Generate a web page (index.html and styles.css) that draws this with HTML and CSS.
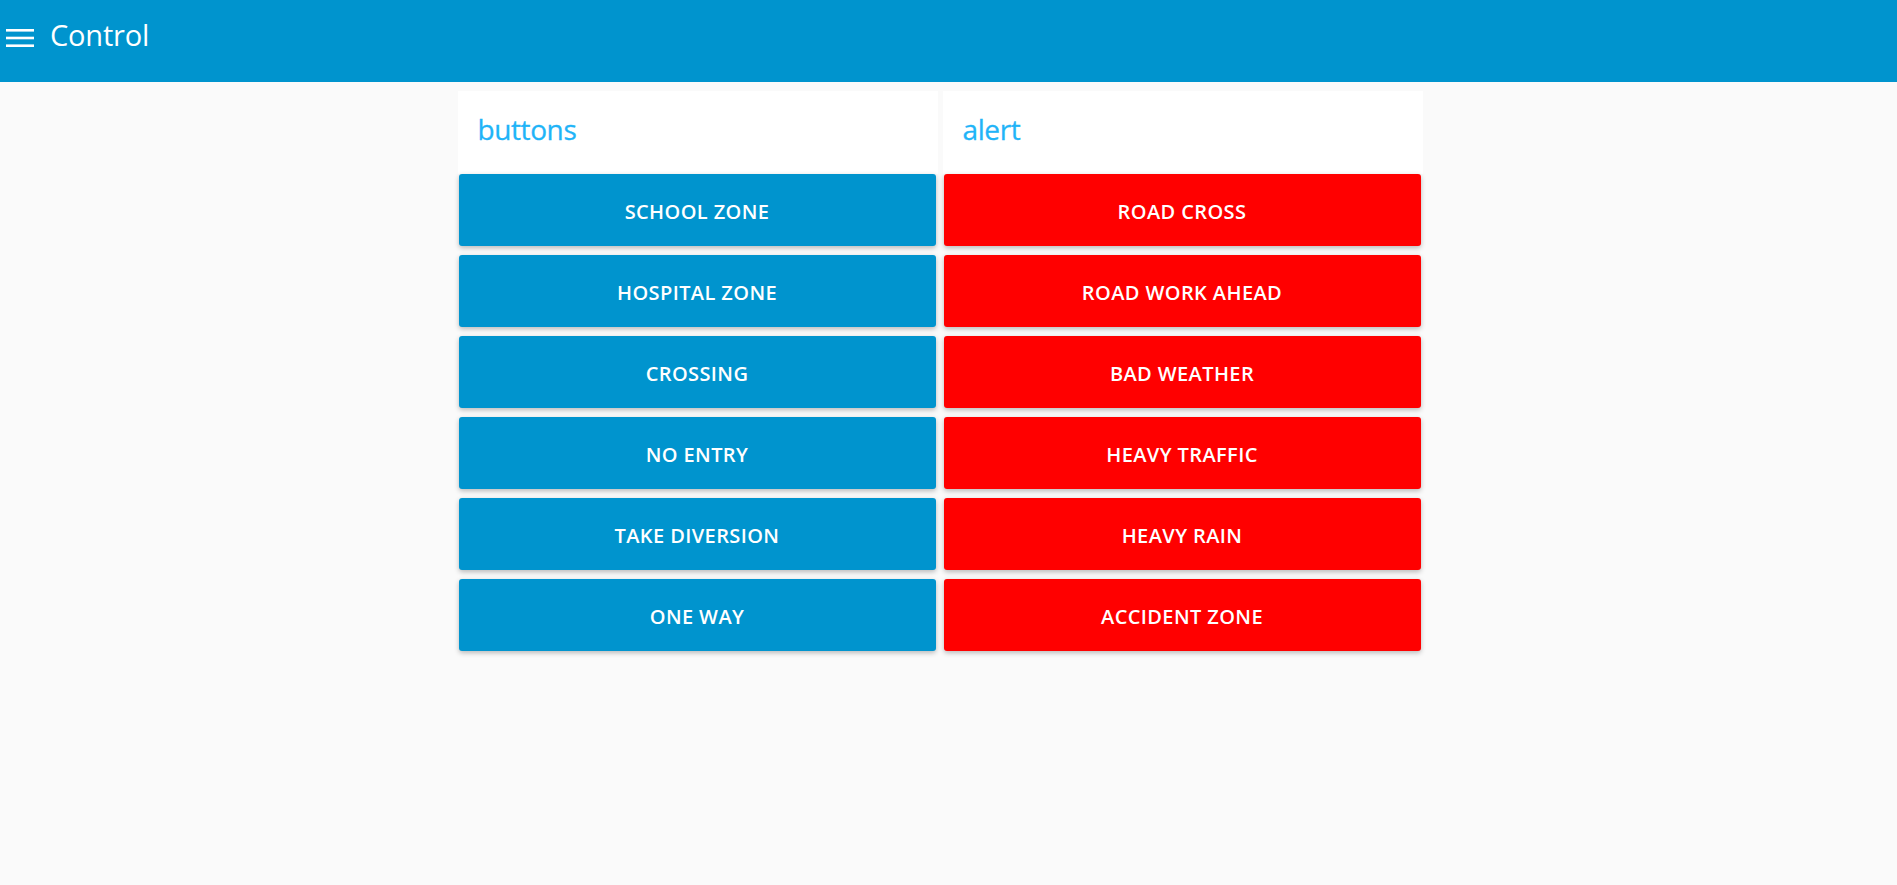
FILE: index.html
```html
<!DOCTYPE html>
<html lang="en">
<head>
<meta charset="utf-8">
<title>Control</title>
<link rel="stylesheet" href="styles.css">
</head>
<body>
<header class="toolbar">
  <div class="toolbar-row">
    <svg class="menu-icon" width="28" height="18" viewBox="0 0 28 18" aria-hidden="true">
      <rect x="0" y="0" width="28" height="2.6" fill="#fff"/>
      <rect x="0" y="7.7" width="28" height="2.6" fill="#fff"/>
      <rect x="0" y="15.4" width="28" height="2.6" fill="#fff"/>
    </svg>
    <h1 class="title">Control</h1>
  </div>
</header>
<main class="content">
  <section class="group">
    <div class="group-header"><span class="group-title">buttons</span></div>
    <div class="group-body">
      <button class="btn btn-blue">SCHOOL ZONE</button>
      <button class="btn btn-blue">HOSPITAL ZONE</button>
      <button class="btn btn-blue">CROSSING</button>
      <button class="btn btn-blue">NO ENTRY</button>
      <button class="btn btn-blue">TAKE DIVERSION</button>
      <button class="btn btn-blue">ONE WAY</button>
    </div>
  </section>
  <section class="group">
    <div class="group-header"><span class="group-title">alert</span></div>
    <div class="group-body">
      <button class="btn btn-red">ROAD CROSS</button>
      <button class="btn btn-red">ROAD WORK AHEAD</button>
      <button class="btn btn-red">BAD WEATHER</button>
      <button class="btn btn-red">HEAVY TRAFFIC</button>
      <button class="btn btn-red">HEAVY RAIN</button>
      <button class="btn btn-red">ACCIDENT ZONE</button>
    </div>
  </section>
</main>
</body>
</html>
```
FILE: styles.css
```css
* { box-sizing: border-box; }
html, body {
  margin: 0;
  padding: 0;
  background: #fafafa;
  font-family: "Open Sans", "Noto Sans", sans-serif;
  height: 100%;
}
.toolbar {
  height: 82px;
  background: #0094ce;
  color: #fff;
}
.toolbar-row {
  display: flex;
  align-items: flex-start;
  padding: 0 0 0 6px;
}
.menu-icon {
  display: block;
  margin-top: 29px;
  flex: none;
}
.title {
  margin: 0 0 0 16px;
  font-weight: 400;
  font-size: 29px;
  line-height: 29px;
  padding-top: 20px;
  letter-spacing: -0.2px;
}
.content {
  display: flex;
  justify-content: center;
  gap: 5px;
  padding: 9px 17px 0 0;
}
.group {
  width: 480px;
  display: flex;
  flex-direction: column;
}
.group-header {
  height: 83px;
  background: #fff;
  padding: 20px 0 0 20px;
}
.group-title {
  display: block;
  font-size: 28px;
  line-height: 36px;
  color: #1fb4f8;
  letter-spacing: -0.4px;
  -webkit-text-stroke: 0.3px #1fb4f8;
}
.group-body {
  display: flex;
  flex-direction: column;
  gap: 9px;
  padding: 0 2px 0 1px;
}
.btn {
  height: 72px;
  width: 100%;
  border: none;
  border-radius: 3px;
  color: #fff;
  font-family: "Open Sans", "Noto Sans", sans-serif;
  font-weight: 600;
  font-size: 20px;
  letter-spacing: 0.4px;
  box-shadow: 0 2px 5px 0 rgba(0, 0, 0, 0.26);
  cursor: pointer;
  padding: 3px 0 0;
}
.btn-blue { background: #0094ce; }
.btn-red { background: #ff0000; }
```
